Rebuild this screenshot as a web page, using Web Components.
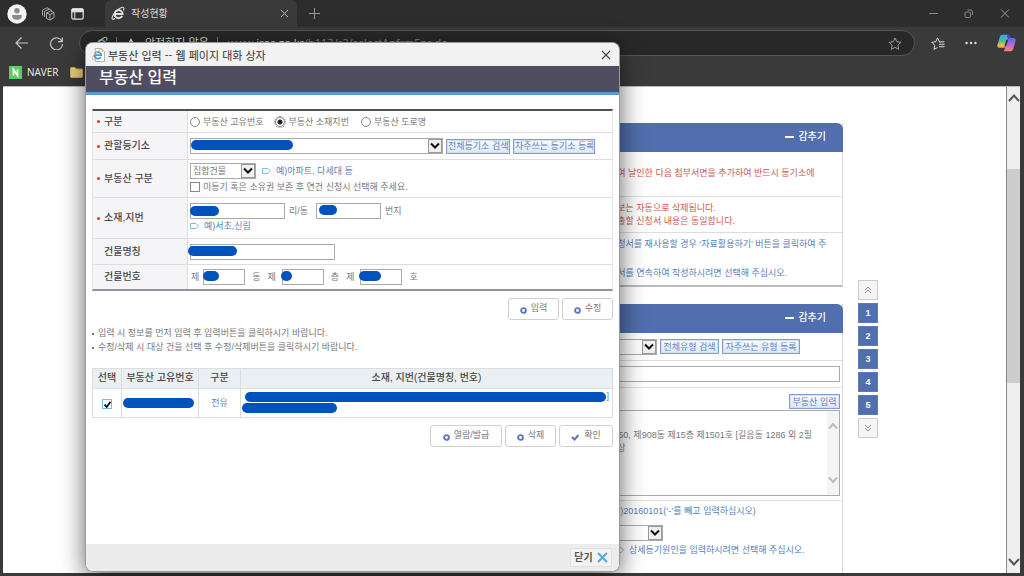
<!DOCTYPE html>
<html lang="ko">
<head>
<meta charset="utf-8">
<title>작성현황</title>
<style>
html,body{margin:0;height:100%}
body{font:9px/14px "Liberation Sans","Noto Sans CJK KR",sans-serif;color:#777;background:#1c1c1c;overflow:hidden;position:relative}
</style>
</head>
<body>
<browser-window>
  <registry-page></registry-page>
</browser-window>
<property-dialog></property-dialog>

<script>
const base = `*{box-sizing:border-box}button,input,select,textarea{font:inherit;color:inherit;margin:0;padding:0;border-radius:0}button{background:none;border:0}svg{display:block;flex:none}a{color:inherit;text-decoration:none}`;
function define(name, css, html, setup) {
  const tpl = document.createElement('template');
  tpl.innerHTML = `<style>${base}${css}</style>${html}`;
  customElements.define(name, class extends HTMLElement {
    constructor() {
      super();
      this.attachShadow({ mode: 'open' }).append(tpl.content.cloneNode(true));
    }
    connectedCallback() { if (setup) setup(this, this.shadowRoot); }
  });
}

/* Opaque marker stroke that hides private data */
define('ink-mark', `:host{position:absolute;background:#0052bd;border-radius:5px;height:10px}`, ``, el => {
  el.style.left = el.getAttribute('x') + 'px';
  el.style.top = el.getAttribute('y') + 'px';
  if (el.hasAttribute('w')) el.style.width = el.getAttribute('w') + 'px';
  else el.style.right = '6px';
});

/* Drop-down with a classic arrow box */
define('drop-down', `
:host{display:block;position:relative;height:16px}
select{appearance:none;width:100%;height:16px;border:1px solid #aaa;background:#fff;padding:0 16px 0 2px;line-height:14px;display:block}
span{position:absolute;right:1px;top:1px;width:14px;height:14px;border:1px solid #999;background:#efefef;display:grid;place-items:center;pointer-events:none}
`, `<select><option></option></select><span><svg width="10" height="8" viewBox="0 0 10 8"><path d="M1 1.5 5 5.5 9 1.5" fill="none" stroke="#111" stroke-width="2"/></svg></span>`,
(el, root) => {
  root.querySelector('option').textContent = el.getAttribute('value') || '';
  root.querySelector('select').setAttribute('aria-label', el.getAttribute('label'));
});

/* Small blue button */
define('small-button', `
:host{display:block}
button{display:block;white-space:nowrap;width:100%;height:15px;border:1px solid #7f9fd4;outline:1px solid #d3def0;outline-offset:-2px;background:linear-gradient(#fbfcfe,#dbe5f4);color:#5d82c4;line-height:12px;padding:0 1px}
`, `<button type="button"><slot></slot></button>`);

/* White action button, ring or check icon */
define('action-button', `
:host{display:block}
button{display:flex;align-items:center;justify-content:center;gap:4px;width:100%;height:22px;border:1px solid #d0d0d0;border-radius:3px;background:#fff;color:#777;line-height:14px;padding:0 0 2px}
svg{margin-top:4px}
.check{display:none}
:host([check]) .check{display:block}
:host([check]) .ring{display:none}
`, `<button type="button"><svg class="ring" width="7" height="7" viewBox="0 0 7 7"><circle cx="3.5" cy="3.5" r="2.4" fill="none" stroke="#5878bc" stroke-width="1.9"/></svg><svg class="check" width="9" height="7" viewBox="0 0 9 7"><path d="M1 3 3.5 5.5 7.5 1" fill="none" stroke="#5878bc" stroke-width="1.9"/></svg><slot></slot></button>`);

define('hint-line', `
:host{display:flex;align-items:center;gap:5px;color:#5580bb;white-space:nowrap;height:14px}
`, `<svg width="9" height="6" viewBox="0 0 9 6"><path d="M.5.5H6L8.5 3 6 5.5H.5Z" fill="#fff" stroke="#7fbbe6"/></svg><span><slot></slot></span>`);

/* Browser emblem: ring with a crossbar and an orbit */
const emblem = (ring, orbit) => `<g fill="none"><path d="M11.200 9.900A4 4 0 1 1 11.600 7.900H4" stroke="${ring}" stroke-width="2"/><path d="M4 12.500C1.500 14.300.4 13 1.500 10.500 3 7 6.500 3.500 9.500 1.900 12.500.4 13.600 1.800 12.500 4.500" stroke="${orbit}" stroke-width="1.100"/></g>`;

define('browser-window', `
:host{display:flex;flex-direction:column;height:100%;background:#3a3a3a;border-bottom:1px solid #000}
.tabs{display:flex;height:27px;background:#2d2d2d;align-items:center;flex:none;color:#ddd}
.left{display:flex;align-items:center;width:105px;padding-left:7px;gap:14px;flex:none}
.tab{display:flex;align-items:center;width:192px;height:27px;background:#3a3a3a;border-radius:6px 6px 0 0;padding:0 8px 0 6px;gap:6px;font-size:10px}
.tab b{font-weight:400;flex:1}
.new{margin-left:12px}
.win{display:flex;margin-left:auto;gap:26px;padding-right:14px}
.bar{display:flex;align-items:center;height:31px;flex:none;padding:1px 8px 0 14px;gap:20px;color:#ddd}
.url{flex:1;height:26px;border:1px solid #555;border-radius:13px;background:#282828;display:flex;align-items:center;padding:0 12px 0 14px;gap:8px;font-size:11px;line-height:24px;margin-left:-5px;white-space:nowrap;min-width:0}
.url i{width:1px;height:12px;background:#777}
.url a{color:#888;flex:1;font:11px/24px "Open Sans","Noto Sans CJK KR",sans-serif;margin-left:2px}
.url em{font-style:normal;color:#ddd}
.fav{display:flex;height:28px;flex:none;align-items:center;padding-left:9px;gap:5px;color:#eee;font:10px/14px "Open Sans","Noto Sans CJK KR",sans-serif}
.fav a+svg{margin-left:6px}
.view{flex:1;min-height:0;margin:0 4px 3px 3px;background:#fff;display:flex;border-top:1px solid #bbb}
.page{flex:1;min-width:0;overflow:hidden}
.scroll{width:14px;background:#efefef;border-left:1px solid #888;display:flex;flex-direction:column;align-items:center;padding:6px 0}
.thumb{width:13px;height:214px;background:#cdcdcd;margin-top:67px}
.scroll svg:last-child{margin-top:auto}
`, `
<div class="tabs"><div class="left">
<svg width="20" height="20" viewBox="0 0 20 20"><circle cx="10" cy="10" r="9.700" fill="#f5f5f5"/><circle cx="10" cy="6.800" r="2.700" fill="#8b8b8b"/><path d="M5.300 11h9.400c.8 3-1.500 4.800-4.700 4.800S4.500 14 5.300 11Z" fill="#8b8b8b"/></svg>
<svg width="16" height="14" viewBox="0 0 16 14" fill="none" stroke="#aaa"><path d="m5.500 6 4-2 3.500 1.500v5l-4 2.500-3.500-1.500ZM5.500 6 9 7.500 13 5.500M9 7.500V13M3.500 10V4.500L8 2.200l3 1.300M1.500 8.500V3L6 .8l2.500 1"/></svg>
<svg width="13" height="12" viewBox="0 0 13 12"><rect x=".8" y=".8" width="11.400" height="10.400" rx="1.800" fill="none" stroke="#e4e4e4" stroke-width="1.200"/><path d="M1 1h11v2.800H1ZM3.800 4v7" fill="#e4e4e4" stroke="#e4e4e4"/></svg>
</div>
<div class="tab"><svg width="14" height="15" viewBox="0 0 14 15">${emblem('#ddd','#ddd')}</svg><b>작성현황</b><svg width="9" height="9" viewBox="0 0 9 9"><path d="M1 1l7 7M8 1 1 8" stroke="#bbb"/></svg></div>
<svg class="new" width="11" height="11" viewBox="0 0 11 11"><path d="M5.500 0v11M0 5.500h11" stroke="#999"/></svg>
<div class="win"><svg width="9" height="9" viewBox="0 0 9 9"><path d="M0 4.500h9" stroke="#888"/></svg><svg width="10" height="9" viewBox="0 0 10 9" fill="none" stroke="#888"><rect x="1" y="3" width="5.500" height="5.500" rx="1"/><path d="M3.500 1H7a1.500 1.500 0 0 1 1.500 1.500V6"/></svg><svg width="10" height="9" viewBox="0 0 10 9"><path d="M1 .5l8 8M9 .5l-8 8" stroke="#999"/></svg></div></div>
<div class="bar">
<svg width="15" height="14" viewBox="0 0 15 14" fill="none" stroke="#c8c8c8" stroke-width="1.200"><path d="M14 7H2M7.500 1.500 2 7l5.500 5.500"/></svg>
<svg width="15" height="14" viewBox="0 0 15 14" fill="none" stroke="#c8c8c8" stroke-width="1.200"><path d="M13 5.500A6 6 0 1 0 13.500 8M13.300 1.500v4.200H9"/></svg>
<div class="url"><svg width="14" height="15" viewBox="0 0 14 15">${emblem('#4aa8e8','#e6c354')}</svg><i></i><svg width="12" height="12" viewBox="0 0 12 12"><path d="M6 1 11.500 11.500H.5Z" fill="#eee"/><path d="M6 4.500V8M6 9v1.300" stroke="#282828"/></svg><span>안전하지 않음</span><i></i><a href="#">www.<em>iros.go.kr</em>/b113/r2/selectAnfrmEnr.do</a>
<svg width="14" height="13" viewBox="0 0 14 13"><path d="m7 .9 1.800 3.900 4.200.5-3.100 2.900.8 4.200L7 10.300l-3.700 2.100.8-4.200L1 5.300l4.200-.5Z" fill="none" stroke="#999"/></svg></div>
<svg style="margin-left:-4px" width="14" height="13" viewBox="0 0 14 13"><path d="M9 4.800h-.5L6.500.9 4.700 4.800.8 5.300l2.900 2.900L3 12.400 6.500 10.500M8 7.300h5.500M8 4.900h5.500M8 9.700h5.500" fill="none" stroke="#ddd"/></svg>
<svg width="12" height="4" viewBox="0 0 12 4" fill="#ddd"><circle cx="1.600" cy="2" r="1.200"/><circle cx="6" cy="2" r="1.200"/><circle cx="10.400" cy="2" r="1.200"/></svg>
<svg width="19" height="18" viewBox="0 0 19 18"><defs><linearGradient id="l" x2="0" y2="1"><stop stop-color="#38a9ef"/><stop offset=".5" stop-color="#55b889"/><stop offset=".8" stop-color="#f1c743"/><stop offset="1" stop-color="#ee7544"/></linearGradient><linearGradient id="r" x2="0" y2="1"><stop stop-color="#506be5"/><stop offset=".5" stop-color="#bd62dd"/><stop offset="1" stop-color="#f58860"/></linearGradient></defs><path d="M5 .8h7L8.500 12.500C8 14 7 14 5 14H2.500C.6 14 0 12.500.6 10.500L2.800 3C3.300 1.500 4 .8 5 .8Z" fill="url(#l)"/><path d="M14 17.200H7L10.500 5.500C11 4 12 4 14 4h2.500c1.900 0 2.500 1.500 1.900 3.500L16.200 15c-.5 1.500-1.200 2.200-2.200 2.200Z" fill="url(#r)"/><path d="m9.200 6 2-.5-2 6.500-1.800.3Z" fill="#333"/><path d="M10 .8h2c1 0 1.500.8 2 3.200h-3.500Z" fill="#304bcf"/></svg>
</div>
<div class="fav"><svg width="13" height="13" viewBox="0 0 13 13"><rect width="13" height="13" fill="#5ccb68"/><path d="M4.500 9.500v-6l4 6v-6" fill="none" stroke="#fff" stroke-width="1.700"/></svg><a href="#">NAVER</a><svg width="13" height="11" viewBox="0 0 13 11"><path d="M.5 1.500Q.5.500 1.500.5H5L6.500 2H11.500Q12.500 2 12.500 3V9.500Q12.500 10.500 11.500 10.500H1.500Q.5 10.500.5 9.500Z" fill="#ecd37b" stroke="#cfae4b"/></svg></div>
<div class="view"><div class="page"><slot></slot></div><div class="scroll"><svg width="12" height="9" viewBox="0 0 12 9"><path d="M1 8 6 2.500 11 8" fill="none" stroke="#555" stroke-width="2"/></svg><div class="thumb"></div><svg width="12" height="9" viewBox="0 0 12 9"><path d="M1 1 6 6.500 11 1" fill="none" stroke="#555" stroke-width="2"/></svg></div></div>
`);

/* Blue-headed panel of the page */
define('blue-panel', `
:host{display:block;border-right:1px solid #d9d9d9}
header{height:29px;background:#516fae;border-radius:6px 6px 0 0;margin-right:-1px;display:flex;justify-content:flex-end;align-items:center;padding:0 17px 1px 0}
button{display:flex;align-items:center;gap:4px;color:#fff;font-size:10px;font-weight:500;line-height:14px}
i{width:9px;height:2px;background:#fff}
`, `<header><button type="button"><i></i>감추기</button></header><slot></slot>`);

/* Row whose content sits in the right-hand column */
define('panel-row', `
:host{display:grid;grid-template-columns:1fr 233px;border-bottom:1px solid #ddd;white-space:nowrap}
div{display:flex;flex-direction:column;justify-content:center;grid-column:2;line-height:13px}
`, `<div><slot></slot></div>`);

define('step-nav', `
:host{display:flex;flex-direction:column;gap:3px;width:20px}
a{height:20px;background:#516fae;border:1px solid #5f7bb6;color:#fff;font-weight:700;display:grid;place-items:center}
a.end{background:#f5f5f6;border:1px solid #ccc}
`, `<a class="end" href="#" aria-label="맨 위로"><svg width="8" height="8" viewBox="0 0 8 8"><path d="m1 4 3-3 3 3M1 7l3-3 3 3" fill="none" stroke="#888"/></svg></a><a href="#">1</a><a href="#">2</a><a href="#">3</a><a href="#">4</a><a href="#">5</a><a class="end" href="#" aria-label="맨 아래로"><svg width="8" height="8" viewBox="0 0 8 8"><path d="m1 1 3 3 3-3M1 4l3 3 3-3" fill="none" stroke="#888"/></svg></a>`);

define('registry-page', `
:host{display:flex;height:100%;box-sizing:border-box;gap:15px;padding:36px 128px 0 170px}
main{flex:1;min-width:0;display:flex;flex-direction:column;gap:17px}
main blue-panel:last-child{flex:1}
step-nav{margin-top:157px}
.red{color:#cc5a4c}.blue{color:#5580bb}
.r1{height:45px;padding-bottom:2px}.r2{height:36px}.r3{height:54px;border-bottom:2px solid #bbb}
.r3 p+p{margin-top:16px}
p{margin:0}
.line{display:flex;gap:3px;align-items:center}
.line.top{margin-left:-24px}
.line drop-down{width:72px;flex:none}
.s1{width:59px}.s2{width:78px}
.r4{height:28px}.r5{height:27px}
.r5 input{width:calc(100% + 30px);margin:0 0 0 -30px;height:16px;border:1px solid #aaa}
.wide{border-bottom:1px solid #ddd;padding:6px 2px 4px}
.wide small-button{width:51px;margin-left:auto}
.area{display:flex;border:1px solid #aaa;height:86px;margin-top:1px;justify-content:flex-end}
textarea{width:218px;border:0;resize:none;padding:18px 0 0;line-height:13px;overflow:hidden;background:#fff;display:block;white-space:pre}
.area span{width:12px;background:#f4f4f4;display:flex;flex-direction:column;justify-content:space-between;padding:11px 1px}
.r6{border:0;padding-top:4px}
.r6 drop-down{margin:7px 0 2px -18px;width:72px}
hint-line{margin-left:6px;height:14px}
`, `
<main>
<blue-panel>
<panel-row class="r1 red"><p>하여 날인한 다음 첨부서면을 추가하여 반드시 등기소에</p></panel-row>
<panel-row class="r2 red"><p>정보는 자동으로 삭제됩니다.</p><p>제출할 신청서 내용은 동일합니다.</p></panel-row>
<panel-row class="r3 blue"><p>신청서를 재사용할 경우 ‘자료활용하기’ 버튼을 클릭하여 주</p><p>청서를 연속하여 작성하시려면 선택해 주십시오.</p></panel-row>
</blue-panel>
<blue-panel>
<panel-row class="r4"><div class="line top"><drop-down label="등기유형"></drop-down><small-button class="s1">전체유형 검색</small-button><small-button class="s2">자주쓰는 유형 등록</small-button></div></panel-row>
<panel-row class="r5"><div style="padding-right:2px"><input aria-label="등기 제목"></div></panel-row>
<div class="wide"><small-button>부동산 입력</small-button><div class="area"><textarea aria-label="부동산 표시">1150, 제908동 제15층 제1501호 [길음동 1286 외 2필
지상</textarea><span><svg width="10" height="8" viewBox="0 0 10 8"><path d="M1 6.500 5 2l4 4.500" fill="none" stroke="#bbb" stroke-width="2"/></svg><svg width="10" height="8" viewBox="0 0 10 8"><path d="M1 1.500 5 6l4-4.500" fill="none" stroke="#bbb" stroke-width="2"/></svg></span></div></div>
<panel-row class="r6 blue"><p>(예)20160101(‘-’를 빼고 입력하십시오)</p><drop-down label="등기원인"></drop-down><hint-line>상세등기원인을 입력하시려면 선택해 주십시오.</hint-line></panel-row>
</blue-panel>
</main>
<step-nav></step-nav>
`);

define('form-row', `
:host{display:grid;grid-template-columns:95px 1fr;border-bottom:1px solid #ddd}
.label{background:#f5f5f8;border-right:1px solid #ddd;color:#444;font-size:10px;font-weight:500;display:flex;align-items:center;padding-left:11px}
:host([required]) .label::before{content:"";width:3px;height:3px;border-radius:50%;background:#e33;margin:0 4px 0 -7px}
.field{display:flex;flex-direction:column;justify-content:center;padding-left:2px;position:relative;white-space:nowrap}
`, `<div class="label"><slot name="label"></slot></div><div class="field"><slot></slot></div>`);

define('property-form', `
:host{display:block;border:1px solid #e3e3e3;border-top:2px solid #4f4d5f;border-bottom:2px solid #94929f}
form-row{height:26px}
.h1{height:22px}.h2{height:27px}.h3{height:38px}.h4{height:41px}
form-row:last-child{border:0;height:24px}
.line{display:flex;align-items:center;position:relative;height:16px}
input[type=text]{height:16px;border:1px solid #aaa;background:#fff}
.w1{width:95px}.w2{width:65px}.w3{width:145px}.w4{width:42px}
input[type=radio],input[type=checkbox]{appearance:none;width:10px;height:10px;border:1px solid #888;background:#fff;margin:0 3px 0 0}
input[type=radio]{border-radius:50%}
input[type=radio]:checked{background:radial-gradient(circle,#222 0 2px,#fff 3px);outline:1px dotted #777;outline-offset:0}
.radio label{margin-right:12px}
.line span{margin:0 4px}
.line span.n{margin:0 7px}
.line span.f{margin:0 4px 0 1px}
.line span.g{margin:0 6px 0 0}
small-button{margin-left:3px}
.s1{width:64px}.s2{width:82px}
.long{flex:0 1 253px}
.kind{width:66px}
.kind+hint-line{margin-left:6px}
`, `
<form-row required class="h1"><span slot="label">구분</span><div class="line radio"><input type="radio" name="k" id="k1"><label for="k1">부동산 고유번호</label><input type="radio" name="k" id="k2" checked><label for="k2">부동산 소재지번</label><input type="radio" name="k" id="k3"><label for="k3">부동산 도로명</label></div></form-row>
<form-row required class="h2"><span slot="label">관할등기소</span><div class="line"><drop-down class="long" label="관할등기소"></drop-down><small-button class="s1">전체등기소 검색</small-button><small-button class="s2">자주쓰는 등기소 등록</small-button><ink-mark x="1" y="2" w="102"></ink-mark></div></form-row>
<form-row required class="h3"><span slot="label">부동산 구분</span><div class="line"><drop-down class="kind" label="부동산 구분" value="집합건물"></drop-down><hint-line>예)아파트, 다세대 등</hint-line></div><div class="line"><input type="checkbox" id="c"><label for="c">미등기 혹은 소유권 보존 후 연건 신청시 선택해 주세요.</label></div></form-row>
<form-row required class="h4"><label slot="label" for="a1">소재,지번</label><div class="line"><input type="text" class="w1" id="a1"><span>리/동</span><input type="text" class="w2" id="a2" style="margin-left:4px"><label for="a2" style="margin-left:4px">번지</label><ink-mark x="0" y="3" w="29"></ink-mark><ink-mark x="129" y="2" w="18"></ink-mark></div><hint-line>예)서초,신림</hint-line></form-row>
<form-row><label slot="label" for="b1">건물명칭</label><div class="line"><input type="text" class="w3" id="b1"><ink-mark x="-2" y="2" w="49"></ink-mark></div></form-row>
<form-row><label slot="label" for="n1">건물번호</label><div class="line"><span class="f">제</span><input type="text" class="w4" id="n1"><span class="n">동</span><span class="g">제</span><input type="text" class="w4" id="n2" aria-label="층"><span class="n">층</span><span class="g">제</span><input type="text" class="w4" id="n3" aria-label="호"><span class="n">호</span><ink-mark x="13" y="2" w="16"></ink-mark><ink-mark x="91" y="2" w="11"></ink-mark><ink-mark x="169" y="2" w="22"></ink-mark></div></form-row>
`);

define('property-list', `
:host{display:block}
table{width:100%;border-collapse:collapse;table-layout:fixed}
th,td{border:1px solid #ddd;padding:0;text-align:center;position:relative}
th{background:#eaeff3;color:#444;font-size:10px;font-weight:500;height:20px;line-height:14px;padding-bottom:2px;white-space:nowrap}
td{height:29px;color:#5580bb;vertical-align:middle}
td:last-child{text-align:right;vertical-align:top;padding:0 3px 0 0}
input{appearance:none;width:10px;height:10px;border:1px solid #6fbfe8;display:block;margin:1px auto 0;background:#fff}
label{display:block;position:relative}
svg{position:absolute;left:10px;top:1px;pointer-events:none}
`, `<table><colgroup><col style="width:29px"><col style="width:77px"><col style="width:42px"><col></colgroup>
<thead><tr><th>선택</th><th>부동산 고유번호</th><th>구분</th><th>소재, 지번(건물명칭, 번호)</th></tr></thead>
<tbody><tr><td><label><input type="checkbox" checked aria-label="선택"><svg width="9" height="9" viewBox="0 0 9 9"><path d="M1.500 4.500 3.700 7 7.500 1.800" fill="none" stroke="#111" stroke-width="1.800"/></svg></label></td><td><ink-mark x="1" y="9" w="71"></ink-mark></td><td>전유</td><td>]<ink-mark x="4" y="3"></ink-mark><ink-mark x="1" y="14" w="95"></ink-mark></td></tr></tbody></table>`);

define('property-dialog', `
:host{position:absolute;left:86px;right:405px;top:43px;bottom:5px;min-width:530px;display:flex;flex-direction:column;background:#fff;border-radius:7px;overflow:hidden;box-shadow:0 0 0 1px #999,0 6px 26px rgba(0,0,0,.65)}
.title{height:23px;background:#f2f2f2;color:#333;display:flex;align-items:center;gap:3px;padding:0 8px 0 6px;font:11px/16px "Noto Sans CJK KR",sans-serif;flex:none}
.title button{margin-left:auto}
h1{margin:0;height:29px;flex:none;background:#4f4d5f;border-bottom:3px solid #5a9bd3;color:#fff;font-size:16px;font-weight:500;line-height:24px;padding-left:13px}
.body{flex:1;padding:14px 6px 0}
.actions{display:flex;justify-content:flex-end;gap:3px;margin-top:7px}
.a{width:51px}.b{width:72px}.c{width:54px}
ul{list-style:none;margin:6px 0 14px;padding:0}
li{display:flex;align-items:center;gap:4px}
li::before{content:"";width:2px;height:2px;background:#777;margin-top:2px}
footer{height:27px;flex:none;background:#ececec;display:flex;justify-content:flex-end;align-items:center;padding-right:7px}
footer button{width:42px;height:19px;border:1px solid #e0e0e0;background:#f3f3f3;border-radius:2px;font-size:10px;font-weight:700;color:#555;display:flex;align-items:center;justify-content:center;gap:4px}
`, `
<div class="title"><svg width="13" height="14" viewBox="0 0 14 15"><path d="M3.500.5H10l3.500 3.500v10.500h-10Z" fill="#fff" stroke="#aaa"/><g transform="translate(-.5 .5) scale(.9)">${emblem('#3f9fdf','#e0b53c')}</g></svg><span>부동산 입력 -- 웹 페이지 대화 상자</span><button type="button" aria-label="닫기"><svg width="10" height="10" viewBox="0 0 10 10"><path d="M1 1l8 8M9 1 1 9" stroke="#444" stroke-width="1.100"/></svg></button></div>
<h1>부동산 입력</h1>
<div class="body"><property-form></property-form>
<div class="actions"><action-button class="a">입력</action-button><action-button class="a">수정</action-button></div>
<ul><li>입력 시 정보를 먼저 입력 후 입력버튼을 클릭하시기 바랍니다.</li><li>수정/삭제 시 대상 건을 선택 후 수정/삭제버튼을 클릭하시기 바랍니다.</li></ul>
<property-list></property-list>
<div class="actions"><action-button class="b">열람/발급</action-button><action-button class="a">삭제</action-button><action-button class="c" check>확인</action-button></div></div>
<footer><button type="button">닫기<svg width="11" height="11" viewBox="0 0 11 11"><path d="m1 1 9 9M10 1 1 10" stroke="#58a6dc" stroke-width="2"/></svg></button></footer>
`);
</script>
</body>
</html>
